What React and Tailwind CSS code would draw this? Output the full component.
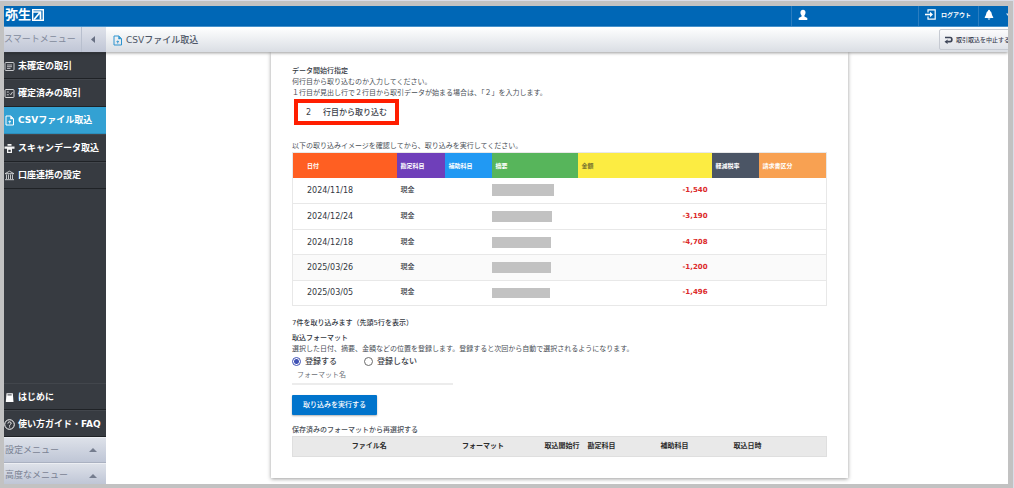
import React from "react";

const base = "w-[11px] h-[11px] shrink-0";

function ListIcon() {
  return (
    <svg viewBox="0 0 11 11" className={base} fill="none" stroke="#c9cbce">
      <rect x="1" y="1.5" width="9" height="8" rx="1" />
      <path d="M3 4h5M3 5.7h5M3 7.4h3.500" strokeWidth="0.9" />
    </svg>
  );
}

function CheckListIcon() {
  return (
    <svg viewBox="0 0 11 11" className={base} fill="none" stroke="#d5d6d8">
      <rect x="1" y="1.5" width="9" height="8" rx="1" />
      <path d="M2.800 4h2M2.800 6.800h2M5.800 5.500l1 1.200 1.700-2.700" strokeWidth="0.9" />
    </svg>
  );
}

function FileIcon({ color }) {
  return (
    <svg viewBox="0 0 11 11" className={base} fill="none" stroke={color}>
      <path d="M2 1h4.800L9.500 3.700V10H2z" strokeLinejoin="round" />
      <path d="M6.500 1v3h3z" fill={color} strokeWidth="0.4" />
      <path d="M5.700 8.500V6M4.400 7.100l1.300-1.300L7 7.100" strokeWidth="0.9" />
    </svg>
  );
}

function ScanIcon() {
  return (
    <svg viewBox="0 0 11 11" className={base} fill="#f4f4f4">
      <path d="M3.500 1h4v1.800h-4zM0.500 3.500h10v2.300H0.500zM3 5.800h5V10H3z" />
      <path d="M4.300 6.800h2.400v2H4.300z" fill="#373b41" />
    </svg>
  );
}

function BankIcon() {
  return (
    <svg viewBox="0 0 11 11" className={base} fill="none" stroke="#d5d6d8" strokeWidth="0.9">
      <path d="M1 3.700L5.500 1.200 10 3.700zM1 9.700h9M2.500 4.500v4.500M4.500 4.500v4.500M6.500 4.500v4.500M8.500 4.500v4.500" />
    </svg>
  );
}

function BookIcon() {
  return (
    <svg viewBox="0 0 11 11" className={base}>
      <path d="M2.500 1.200h6.300L9.500 10H1.800z" fill="#fff" />
      <path d="M3.500 2.900h4.200" stroke="#373b41" />
    </svg>
  );
}

function HelpIcon() {
  return (
    <svg viewBox="0 0 11 11" className={base} fill="none" stroke="#fff">
      <circle cx="5.500" cy="5.500" r="4.800" />
      <path d="M3.900 4.500c0-2.200 3.300-2.100 3.200-.1 0 1-1.500 1.100-1.500 2.300M5.600 7.400v1.100" />
    </svg>
  );
}

const menu = [
  { label: "未確定の取引", icon: <ListIcon /> },
  { label: "確定済みの取引", icon: <CheckListIcon /> },
  { label: "CSVファイル取込", icon: <FileIcon color="#fff" />, active: true },
  { label: "スキャンデータ取込", icon: <ScanIcon /> },
  { label: "口座連携の設定", icon: <BankIcon /> },
];

const helpMenu = [
  { label: "はじめに", icon: <BookIcon /> },
  { label: "使い方ガイド・FAQ", icon: <HelpIcon /> },
];

const rows = [
  { date: "2024/11/18", amount: "-1,540", mask: "w-[62px] h-3" },
  { date: "2024/12/24", amount: "-3,190", mask: "w-[60px] h-[11px]" },
  { date: "2024/12/18", amount: "-4,708", mask: "w-[59px] h-[11px]" },
  { date: "2025/03/26", amount: "-1,200", mask: "w-[59px] h-[11px]", shade: true },
  { date: "2025/03/05", amount: "-1,496", mask: "w-[58px] h-[10px]" },
];

const columns = [
  { label: "日付", style: "bg-[#ff5f22] pl-[14px]" },
  { label: "勘定科目", style: "bg-[#6f3fba] pl-1" },
  { label: "補助科目", style: "bg-[#2199f3] pl-1" },
  { label: "摘要", style: "bg-[#57b55b] pl-1" },
  { label: "金額", style: "bg-[#fcec42] pl-1 text-[#77722f]" },
  { label: "軽減税率", style: "bg-[#4b5565] pl-1" },
  { label: "請求書区分", style: "bg-[#f8a152] pl-1" },
];

function MenuLink({ item }) {
  return (
    <a
      href="#"
      aria-current={item.active ? "page" : undefined}
      className={
        "flex items-center gap-[3px] whitespace-nowrap border-b pt-px text-[9px] font-bold text-white " +
        (item.active
          ? "border-[#2b8fbd] bg-[#33a1d3]"
          : "border-[#1f2226] border-t border-t-[#42464c] bg-[#373b41]")
      }
    >
      {item.icon}
      {item.label}
    </a>
  );
}

function SectionButton({ children, className }) {
  return (
    <button
      className={
        "flex shrink-0 items-center justify-between border-t border-t-[#eceef3] bg-linear-to-b from-[#dde1e9] to-[#bfc6d6] pl-px pr-[9px] text-[9px] text-[#7b8394] " +
        className
      }
    >
      {children}
      <svg viewBox="0 0 8 4" className="h-1 w-2" fill="#757d8e">
        <path d="M0 4L4 0l4 4z" />
      </svg>
    </button>
  );
}

export default function App() {
  return (
    <div
      lang="ja"
      className="flex min-h-screen border-r border-t border-[#dadde8] bg-[#c2c2c2] pb-[5px] pl-1 pr-[5px] pt-[5px] font-['DejaVu_Sans','Noto_Sans_CJK_JP',sans-serif] text-[7px] leading-[11px] text-[#4a4f57]"
    >
      <div className="flex min-w-0 flex-1 flex-col overflow-hidden bg-white">
        <header className="flex h-[21px] shrink-0 items-stretch border-b border-[#4c9ddb] bg-[#0067b6] text-white">
          <div className="flex flex-1 items-center gap-px pb-[3px] pl-px text-[13px] font-bold leading-none">
            弥生
            <svg viewBox="0 0 12 12" className="h-3 w-3" fill="none" stroke="#fff" strokeWidth="1.4">
              <path d="M.7.7h10.600v10.600H.7z" />
              <path d="M1 3h7.500v7.500M8.200 3.300L2 10.500" strokeWidth="1.700" />
            </svg>
          </div>
          <div className="flex w-[127px] items-center border-l border-[#2a7dc0] pb-[3px] pl-[6px]">
            <svg viewBox="0 0 10 12" className="h-3 w-[10px]" fill="#fff">
              <path d="M5 .8c3.300 0 3 4.400 1.400 5.600v1L9.300 9v1.900H.7V9l2.900-1.600v-1C2 5.200 1.700.8 5 .8z" />
            </svg>
          </div>
          <button className="flex w-[60px] items-center gap-[5px] whitespace-nowrap border-l border-[#2a7dc0] pb-[3px] pl-[6px] text-[6px] font-bold">
            <svg viewBox="0 0 11 11" className="h-[11px] w-[11px]" fill="none" stroke="#fff" strokeWidth="1.200">
              <path d="M3 3.500V.8h7.200v9.400H3V7.500" />
              <path d="M0 5.500h6" strokeWidth="1.600" />
              <path d="M5 2.800l3 2.700-3 2.700z" fill="#fff" stroke="none" />
            </svg>
            ログアウト
          </button>
          <button aria-label="通知" className="flex w-[30px] items-center justify-between border-l border-[#2a7dc0] pb-[3px] pl-[5px]">
            <svg viewBox="0 0 10 12" className="h-3 w-[10px]" fill="#fff">
              <path d="M5 .8c1 0 1 1 1 1.200 2 .8 1.600 4.500 3.200 6v1H.8V8c1.600-1.500 1.200-5.200 3.200-6 0-.2 0-1.200 1-1.200zM3.700 9.500h2.600c0 1.500-2.600 1.500-2.600 0z" />
            </svg>
            <svg viewBox="0 0 2 12" className="h-3 w-[2px]" fill="#d5e6f4">
              <path d="M0 4.500h2v2.500z" />
            </svg>
          </button>
        </header>

        <div className="z-10 flex h-[25px] shrink-0 items-stretch shadow-[0_1px_3px_rgba(0,0,0,0.4)]">
          <div className="flex w-[102px] shrink-0 items-stretch bg-linear-to-b from-[#dfe2ea] to-[#c0c6d6] text-[9px] text-[#828a9b]">
            <span className="flex w-[77px] items-center whitespace-nowrap">スマートメニュー</span>
            <button aria-label="メニューを閉じる" className="flex flex-1 items-center border-l border-[#b8bfce] pl-[9px]">
              <svg viewBox="0 0 4 7" className="h-[7px] w-1" fill="#687083">
                <path d="M4 0v7L0 3.500z" />
              </svg>
            </button>
          </div>
          <div className="flex min-w-0 flex-1 items-center overflow-hidden bg-linear-to-b from-white to-[#dadee4]">
            <h1 className="flex flex-1 items-center gap-[3px] pl-[6px] pt-px text-[9px] font-medium text-[#4d5666]">
              <FileIcon color="#2c94cf" />
              CSVファイル取込
            </h1>
            <div className="w-[69px] shrink-0">
              <button className="flex h-[21px] items-center gap-[3px] whitespace-nowrap rounded-[2px] border border-[#c6cad2] bg-linear-to-b from-[#fbfbfc] to-[#dfe2e8] pl-1 pr-[6px] text-[6px] font-medium text-[#3d4454]">
                <svg viewBox="0 0 9 8" className="h-2 w-[9px] shrink-0" fill="none" stroke="#3d4457" strokeWidth="1.700">
                  <path d="M1 1.500h5.200c2.200 0 2.200 4.200 0 4.200H3.200" />
                  <path d="M3.600 3.500v4.400L.5 5.700z" fill="#3d4457" stroke="none" />
                </svg>
                取引取込を中止する
              </button>
            </div>
          </div>
        </div>

        <div className="flex flex-1 items-stretch">
          <nav className="flex w-[102px] shrink-0 flex-col bg-[#373b41]">
            <div className="grid h-[137px] auto-rows-fr">
              {menu.map((item) => (
                <MenuLink key={item.label} item={item} />
              ))}
            </div>
            <div className="flex-1" />
            <div className="grid h-[54px] auto-rows-fr">
              {helpMenu.map((item) => (
                <MenuLink key={item.label} item={item} />
              ))}
            </div>
            <SectionButton className="h-[26px] border-b border-b-[#aab1c1]">設定メニュー</SectionButton>
            <SectionButton className="h-[21px] pt-[3px]">高度なメニュー</SectionButton>
          </nav>

          <main className="flex-1 pb-[6px] pl-[5px]">
            <section className="mx-auto max-w-[577px] bg-white px-[21px] pb-[21px] pt-[14px] shadow-[0_1px_4px_rgba(0,0,0,0.4)]">
              <h2 className="font-medium text-[#33383f]">データ開始行指定</h2>
              <p>何行目から取り込むのか入力してください。</p>
              <p>１行目が見出し行で２行目から取引データが始まる場合は、「２」を入力します。</p>
              <label className="ml-[2px] flex h-[26px] w-[105px] items-center border-4 border-[#ff1e00] pl-2 text-[8px] font-medium text-[#3b4048]">
                <input type="text" defaultValue="2" className="w-[17px] bg-transparent outline-none" />
                <span className="whitespace-nowrap">行目から取り込む</span>
              </label>

              <p className="mt-4">以下の取り込みイメージを確認してから、取り込みを実行してください。</p>
              <table className="h-[154px] w-full table-fixed border-collapse border border-[#e8e8e8]">
                <colgroup>
                  <col className="w-[104px]" />
                  <col className="w-[48px]" />
                  <col className="w-[47px]" />
                  <col className="w-[86px]" />
                  <col className="w-[134px]" />
                  <col className="w-[47px]" />
                  <col />
                </colgroup>
                <thead>
                  <tr className="h-[25px] text-left text-[6px] text-white">
                    {columns.map((c) => (
                      <th key={c.label} className={"whitespace-nowrap p-0 font-bold " + c.style}>
                        {c.label}
                      </th>
                    ))}
                  </tr>
                </thead>
                <tbody>
                  {rows.map((r) => (
                    <tr key={r.date} className={"border-b border-[#e8e8e8] " + (r.shade ? "bg-[#fafafa]" : "")}>
                      <td className="p-0 pl-[14px] text-[8px] text-[#33383f]">{r.date}</td>
                      <td className="p-0 pl-1 font-medium text-[#3b4048]">現金</td>
                      <td className="p-0" />
                      <td className="p-0">
                        <div className={"bg-[#c2c2c2] " + r.mask} />
                      </td>
                      <td className="p-0 pr-1 text-right font-bold text-[#dc2a2a]">{r.amount}</td>
                      <td className="p-0" />
                      <td className="p-0" />
                    </tr>
                  ))}
                </tbody>
              </table>

              <p className="mt-3 font-medium text-[#33383f]">7件を取り込みます（先頭5行を表示）</p>
              <h2 className="mt-1 font-medium text-[#33383f]">取込フォーマット</h2>
              <p>選択した日付、摘要、金額などの位置を登録します。登録すると次回から自動で選択されるようになります。</p>
              <div className="flex h-3 items-center text-[8px] font-medium text-[#3b4048]">
                <label className="flex w-[72px] items-center gap-1">
                  <input
                    type="radio"
                    name="save"
                    defaultChecked
                    className="h-[9px] w-[9px] appearance-none rounded-full border border-[#3f51b5] bg-white checked:bg-[radial-gradient(circle,#3f51b5_0_2px,white_3px)]"
                  />
                  登録する
                </label>
                <label className="flex items-center gap-1">
                  <input
                    type="radio"
                    name="save"
                    className="h-[9px] w-[9px] appearance-none rounded-full border border-[#6b6b6b] bg-white checked:bg-[radial-gradient(circle,#3f51b5_0_2px,white_3px)]"
                  />
                  登録しない
                </label>
              </div>
              <input
                type="text"
                aria-label="フォーマット名"
                placeholder="フォーマット名"
                className="block h-[18px] w-[161px] border-b-2 border-[#ececec] pl-[5px] outline-none placeholder:text-[#6b6f76]"
              />
              <button className="mt-[10px] flex h-5 w-[85px] items-center justify-center rounded-[1px] bg-[#0074cc] font-medium text-white shadow-[0_1px_2px_rgba(0,0,0,0.3)]">
                取り込みを実行する
              </button>

              <h2 className="mt-[10px] font-medium">保存済みのフォーマットから再選択する</h2>
              <table className="w-full table-fixed border-collapse border border-[#dfdfdf] bg-[#e9e9e9]">
                <colgroup>
                  <col className="w-[153px]" />
                  <col className="w-[75px]" />
                  <col className="w-[63px]" />
                  <col className="w-[73px]" />
                  <col className="w-[73px]" />
                  <col />
                </colgroup>
                <thead>
                  <tr className="h-5 whitespace-nowrap text-left text-[#2b2b2b]">
                    <th className="p-0 text-center">ファイル名</th>
                    <th className="p-0 text-center">フォーマット</th>
                    <th className="p-0 pr-1 text-right">取込開始行</th>
                    <th className="p-0 pl-1">勘定科目</th>
                    <th className="p-0 pl-1">補助科目</th>
                    <th className="p-0 pl-1">取込日時</th>
                  </tr>
                </thead>
              </table>
            </section>
          </main>
        </div>
      </div>
    </div>
  );
}
